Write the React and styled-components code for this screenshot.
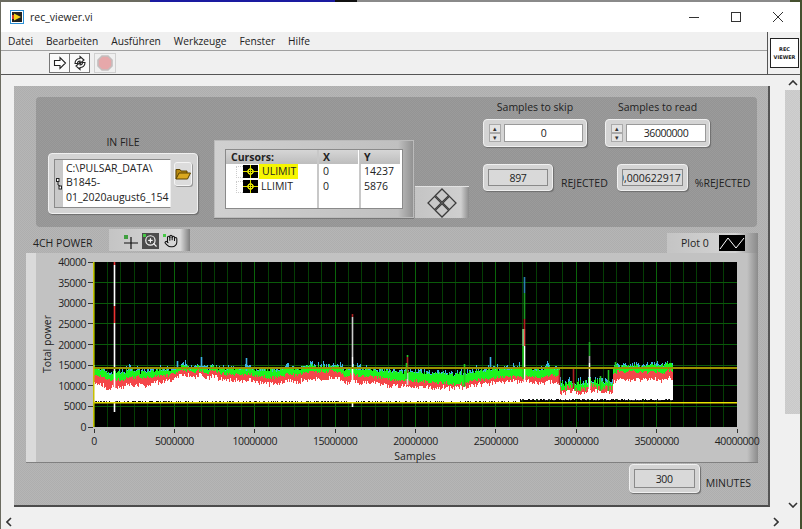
import { useMemo } from 'react'
import styled, { createGlobalStyle } from 'styled-components'
import { Hand, ZoomIn } from 'lucide-react'

const GlobalStyle = createGlobalStyle`
  html, body { margin: 0; padding: 0; }
  body {
    width: 802px;
    height: 529px;
    overflow: hidden;
    background: linear-gradient(90deg, #6b6b60 0 150px, #1a1aa0 150px 335px, #111 335px 357px, #8a8a8a 357px 790px, #45502f 790px);
    font-family: "Open Sans", "Liberation Sans", sans-serif;
    color: #222;
  }
`

const dither = (a, b) => `repeating-conic-gradient(${a} 0 25%, ${b} 0 50%) 0 0 / 2px 2px`

const X_TICKS = [0, 5, 10, 15, 20, 25, 30, 35, 40]
const Y_TICKS = [0, 5, 10, 15, 20, 25, 30, 35, 40]

const px = m => 94 + m * 16.075
const py = k => 426 - k * 4.125

// x, white top, red top, green top
const PROFILE = [
  [94, 383, 374, 367], [110, 386, 378, 371], [140, 384, 376, 370], [165, 381, 375, 369],
  [180, 374, 370, 366], [230, 378, 372, 367], [270, 383, 376, 369], [310, 378, 371, 365],
  [320, 377, 370, 365], [350, 381, 374, 368], [400, 384, 378, 370], [430, 386, 381, 372],
  [460, 387, 383, 373], [490, 382, 377, 369], [520, 381, 376, 368], [559, 383, 376, 368],
  [560, 391, 387, 381], [612, 390, 386, 380], [613, 379, 371, 365], [673, 379, 371, 364],
]

const SPIKES = [
  { x: 114, parts: [[261, 264, '#e33'], [264, 305, '#fff'], [305, 322, '#e33'], [322, 411, '#fff']] },
  { x: 352, parts: [[313, 316, '#a22'], [316, 356, '#ccc'], [356, 406, '#fff']] },
  { x: 407, parts: [[354, 356, '#2c2'], [356, 372, '#a22'], [372, 384, '#ddd']] },
  { x: 406, parts: [[362, 378, '#2c2']] },
  { x: 524, parts: [[276, 292, '#2a7fb0'], [292, 318, '#1a9a20'], [318, 328, '#b02020'], [328, 345, '#e44'], [345, 384, '#fff']] },
  { x: 522.6, parts: [[328, 345, '#8c8'], [345, 378, '#2c2']] },
  { x: 589, parts: [[341, 355, '#1a9a20'], [355, 362, '#aaa'], [362, 388, '#fff']] },
  { x: 177, parts: [[360, 368, '#3cb4e6']] },
  { x: 201, parts: [[356, 368, '#3cb4e6']] },
  { x: 246, parts: [[357, 370, '#3cb4e6']] },
  { x: 490, parts: [[356, 368, '#3cb4e6']] },
  { x: 464, parts: [[363, 386, '#2c2']] },
  { x: 573, parts: [[368, 388, '#a22']] },
  { x: 600, parts: [[375, 390, '#2c2']] },
  { x: 608, parts: [[369, 390, '#2c2']] },
  { x: 559, parts: [[369, 384, '#a22']] },
  { x: 615, parts: [[361, 372, '#2c2']] },
]

function profileAt(x) {
  for (let i = 1; i < PROFILE.length; i++) {
    const a = PROFILE[i - 1]
    const b = PROFILE[i]
    if (x <= b[0]) {
      const t = (x - a[0]) / (b[0] - a[0])
      return [a[1] + (b[1] - a[1]) * t, a[2] + (b[2] - a[2]) * t, a[3] + (b[3] - a[3]) * t]
    }
  }
  return PROFILE[PROFILE.length - 1].slice(1)
}

function buildBands() {
  let seed = 1845
  const rnd = () => {
    seed = (seed * 16807) % 2147483647
    return seed / 2147483647
  }
  const d = { blue: '', green: '', red: '', white: '', dark: '' }
  let wander = 0
  for (let x = 94; x < 673; x++) {
    const [w, r, g] = profileAt(x)
    const low = x >= 560 && x < 613
    const amp = low ? 6 : 3.5
    if (x % 7 === 0) wander = rnd() * 3 - 1.5
    const gy = Math.round(g + wander + rnd() * amp - amp / 2)
    const ry = Math.round(r + wander + rnd() * amp - amp / 2)
    const wy = Math.round(w + wander + rnd() * 5 - 2.5)
    const by = gy - Math.round(rnd() * rnd() * 6)
    const bottom = (x < 520 ? 400 : 398) + Math.round(rnd() * 1.4)
    const col = x + 0.5
    if (by < gy) d.blue += `M${col} ${by}V${gy}`
    d.green += `M${col} ${gy}V${ry}`
    d.red += `M${col} ${ry}V${wy}`
    d.white += `M${col} ${wy}V${bottom}`
    if (rnd() > 0.55) d.dark += `M${col} ${bottom}v1.4`
  }
  return d
}

export default function App() {
  const bands = useMemo(buildBands, [])

  return (
    <Desktop>
      <GlobalStyle />
      <Window>
        <TitleBar>
          <TitleIcon viewBox="0 0 14 14">
            <rect x="0.5" y="0.5" width="13" height="13" fill="#fff" stroke="#2b8fd6" />
            <rect x="2" y="2" width="10" height="10" fill="#222" />
            <path d="M4 3.5 L11 7 L4 10.5 Z" fill="#f2d21a" />
            <rect x="2" y="5" width="2" height="4" fill="#d23a2a" />
          </TitleIcon>
          <TitleText>rec_viewer.vi</TitleText>
          <WindowButton>
            <svg width="10" height="10" viewBox="0 0 10 10"><path d="M0 5.5H10" stroke="#333" /></svg>
          </WindowButton>
          <WindowButton>
            <svg width="10" height="10" viewBox="0 0 10 10"><rect x="0.5" y="0.5" width="9" height="9" fill="none" stroke="#333" /></svg>
          </WindowButton>
          <WindowButton>
            <svg width="10" height="10" viewBox="0 0 10 10"><path d="M0 0L10 10M10 0L0 10" stroke="#333" /></svg>
          </WindowButton>
        </TitleBar>

        <Head>
          <HeadBars>
            <MenuBar>
              <span>Datei</span>
              <span>Bearbeiten</span>
              <span>Ausführen</span>
              <span>Werkzeuge</span>
              <span>Fenster</span>
              <span>Hilfe</span>
            </MenuBar>
            <ToolBar>
              <ToolGroup>
                <ToolButton>
                  <svg width="14" height="14" viewBox="0 0 14 14">
                    <path d="M1.5 4.5H7V1.5L12.5 7L7 12.5V9.5H1.5Z" fill="#fff" stroke="#222" strokeWidth="1.1" />
                  </svg>
                </ToolButton>
                <ToolButton>
                  <svg width="16" height="16" viewBox="0 0 16 16" fill="none" stroke="#222" strokeWidth="1.1">
                    <path d="M3 8.5C3 5 5.5 3.5 8 3.5V1.5L12 5L8 8.5V6C6.5 6 5.5 7 5.5 8.5Z" fill="#fff" />
                    <path d="M13 7.5C13 11 10.5 12.5 8 12.5V14.5L4 11L8 7.5V10C9.5 10 10.5 9 10.5 7.5Z" fill="#fff" />
                  </svg>
                </ToolButton>
              </ToolGroup>
              <AbortButton>
                <svg width="16" height="16" viewBox="0 0 16 16">
                  <path d="M5 1H11L15 5V11L11 15H5L1 11V5Z" fill="#e6a8aa" stroke="#c4bebe" strokeWidth="1.6" />
                </svg>
              </AbortButton>
            </ToolBar>
          </HeadBars>
          <HeadIconCell>
            <ViIcon>REC<br />VIEWER</ViIcon>
          </HeadIconCell>
        </Head>

        <Body>
          <Main>
            <Pane>
              <TopPanel>
                <FileColumn>
                  <CenterLabel>IN FILE</CenterLabel>
                  <FileControl>
                    <PathField>
                      <PathGrip>
                        <svg width="6" height="12" viewBox="0 0 6 12" fill="#fff" stroke="#222">
                          <rect x="0.5" y="0.5" width="2.5" height="3" />
                          <rect x="3" y="8" width="2.5" height="3" />
                          <path d="M2 3.5V7L4 8" fill="none" />
                        </svg>
                      </PathGrip>
                      <PathText>
                        C:\PULSAR_DATA\<br />B1845-<br />01_2020august6_154<br />9_tmrf1.bin
                      </PathText>
                    </PathField>
                    <BrowseButton>
                      <svg width="16" height="12" viewBox="0 0 16 12">
                        <path d="M1 11V1.5H5L6 3H12V5" fill="#b98a10" stroke="#5a4300" />
                        <path d="M1 11L4 5H15.5L12.5 11Z" fill="#d9a820" stroke="#5a4300" />
                      </svg>
                    </BrowseButton>
                  </FileControl>
                </FileColumn>

                <CursorFrame>
                  <CursorTable>
                    <CursorHead $wide>Cursors:</CursorHead>
                    <CursorHead>X</CursorHead>
                    <CursorHead>Y</CursorHead>
                    <CursorName>
                      <TreeStub />
                      <CursorGlyph />
                      <Highlight>ULIMIT</Highlight>
                    </CursorName>
                    <CursorCell>0</CursorCell>
                    <CursorCell>14237</CursorCell>
                    <CursorName>
                      <TreeStub />
                      <CursorGlyph />
                      <PlainName>LLIMIT</PlainName>
                    </CursorName>
                    <CursorCell>0</CursorCell>
                    <CursorCell>5876</CursorCell>
                  </CursorTable>
                </CursorFrame>

                <DiamondButton>
                  <svg width="30" height="30" viewBox="0 0 30 30" fill="#c8c8c8" stroke="#3c3c3c" strokeWidth="1.3">
                    <path d="M15 1L21.6 7.6L15 14.2L8.4 7.6Z" />
                    <path d="M15 15.8L21.6 22.4L15 29L8.4 22.4Z" />
                    <path d="M7.6 8.4L14.2 15L7.6 21.6L1 15Z" />
                    <path d="M22.4 8.4L29 15L22.4 21.6L15.8 15Z" />
                  </svg>
                </DiamondButton>

                <NumericArea>
                  <NumericRow>
                    <NumericColumn>
                      <NumericLabel>Samples to skip</NumericLabel>
                      <SpinControl $width={104}>
                        <Spinner>
                          <SpinArrow>▴</SpinArrow>
                          <SpinArrow>▾</SpinArrow>
                        </Spinner>
                        <InputField>0</InputField>
                      </SpinControl>
                    </NumericColumn>
                    <NumericColumn>
                      <NumericLabel>Samples to read</NumericLabel>
                      <SpinControl $width={105}>
                        <Spinner>
                          <SpinArrow>▴</SpinArrow>
                          <SpinArrow>▾</SpinArrow>
                        </Spinner>
                        <InputField>36000000</InputField>
                      </SpinControl>
                    </NumericColumn>
                  </NumericRow>
                  <IndicatorRow>
                    <Indicator $width={70}><IndicatorValue>897</IndicatorValue></Indicator>
                    <SideLabel $gap={8}>REJECTED</SideLabel>
                    <Indicator $width={71} $gap={9}>
                      <IndicatorValue $clip>0,000622917</IndicatorValue>
                    </Indicator>
                    <SideLabel $gap={7}>%REJECTED</SideLabel>
                  </IndicatorRow>
                </NumericArea>
              </TopPanel>

              <ChartHead>
                <ChartTitle>4CH POWER</ChartTitle>
                <Palette>
                  <PaletteTool>
                    <svg width="15" height="15" viewBox="0 0 15 15">
                      <path d="M1 9H15M8 3V15" stroke="#111" strokeWidth="1.2" />
                      <rect x="1" y="1" width="4" height="4" fill="#3f9f3f" />
                    </svg>
                  </PaletteTool>
                  <PaletteTool $active>
                    <ZoomIn size={14} color="#f4f4f4" strokeWidth={2} />
                    <ToolDot />
                  </PaletteTool>
                  <PaletteTool>
                    <Hand size={14} color="#111" strokeWidth={1.8} />
                    <ToolDot />
                  </PaletteTool>
                </Palette>
                <PlotLegend>
                  <span>Plot 0</span>
                  <svg width="26" height="16" viewBox="0 0 26 16">
                    <rect width="26" height="16" fill="#000" />
                    <path d="M1 14L9 3L17 13L25 3" fill="none" stroke="#fff" />
                  </svg>
                </PlotLegend>
              </ChartHead>

              <ChartFrame>
                <ChartSvg width="732" height="209" viewBox="26 252 732 209">
                  <rect x="94" y="261" width="643" height="165" fill="#000" />
                  <g shapeRendering="crispEdges" strokeWidth="1">
                    {Array.from({ length: 48 }, (_, i) => (
                      <line key={i} x1={px(i * 5 / 6)} x2={px(i * 5 / 6)} y1="261" y2="426" stroke="#053d05" />
                    ))}
                    {X_TICKS.slice(1, -1).map(t => (
                      <line key={t} x1={px(t)} x2={px(t)} y1="261" y2="426" stroke="#0a640a" />
                    ))}
                    {Y_TICKS.slice(1, -1).map(t => (
                      <line key={t} x1="94" x2="737" y1={py(t)} y2={py(t)} stroke="#0a5a0a" />
                    ))}
                  </g>
                  <g shapeRendering="crispEdges" fill="none" strokeWidth="1">
                    <path d={bands.blue} stroke="#3cb4e6" />
                    <path d={bands.green} stroke="#19f51e" />
                    <path d={bands.red} stroke="#f4474a" />
                    <path d={bands.white} stroke="#fff" />
                    <path d={bands.dark} stroke="#333" />
                  </g>
                  <g fill="none" strokeWidth="1.6">
                    {SPIKES.map(s => s.parts.map(([a, b, c]) => (
                      <line key={`${s.x}-${a}`} x1={s.x + 0.5} x2={s.x + 0.5} y1={a} y2={b} stroke={c} />
                    )))}
                  </g>
                  <rect x="94" y="366" width="643" height="2" fill="#9a9200" />
                  <rect x="94" y="401" width="643" height="1.5" fill="#e8e200" />
                  <rect x="93" y="261" width="1.5" height="165" fill="#c8c000" />

                  <g stroke="#333" strokeWidth="1" shapeRendering="crispEdges">
                    {Y_TICKS.map(t => <line key={t} x1="88" x2="93" y1={py(t)} y2={py(t)} />)}
                    {X_TICKS.map(t => <line key={t} x1={px(t)} x2={px(t)} y1="428" y2="432" />)}
                  </g>
                  <AxisText>
                    {Y_TICKS.map(t => (
                      <text key={t} x="86" y={py(t) + 4} textAnchor="end">{t === 0 ? '0' : `${t}000`}</text>
                    ))}
                    {X_TICKS.map(t => (
                      <text key={t} x={px(t)} y="444" textAnchor="middle">{t === 0 ? '0' : `${t}000000`}</text>
                    ))}
                  </AxisText>
                  <AxisTitle>
                    <text x="415" y="459" textAnchor="middle">Samples</text>
                    <text transform="translate(51 343) rotate(-90)" textAnchor="middle">Total power</text>
                  </AxisTitle>
                </ChartSvg>
              </ChartFrame>

              <Footer>
                <Indicator $width={71} $height={29}><IndicatorValue>300</IndicatorValue></Indicator>
                <SideLabel $gap={6}>MINUTES</SideLabel>
              </Footer>
            </Pane>
          </Main>
          <VScroll>
            <ScrollChevron>
              <svg width="10" height="6" viewBox="0 0 10 6"><path d="M1 5L5 1L9 5" fill="none" stroke="#333" strokeWidth="1.6" /></svg>
            </ScrollChevron>
            <VThumb />
            <ScrollChevron>
              <svg width="10" height="6" viewBox="0 0 10 6"><path d="M1 1L5 5L9 1" fill="none" stroke="#333" strokeWidth="1.6" /></svg>
            </ScrollChevron>
          </VScroll>
        </Body>

        <HScroll>
          <svg width="6" height="10" viewBox="0 0 6 10"><path d="M5 1L1 5L5 9" fill="none" stroke="#333" strokeWidth="1.6" /></svg>
          <svg width="6" height="10" viewBox="0 0 6 10"><path d="M1 1L5 5L1 9" fill="none" stroke="#333" strokeWidth="1.6" /></svg>
        </HScroll>
      </Window>
    </Desktop>
  )
}

const Desktop = styled.div`
  width: 802px;
  height: 529px;
  padding: 2px 2px 0 1px;
  box-sizing: border-box;
`

const Window = styled.div`
  width: 799px;
  height: 527px;
  display: flex;
  flex-direction: column;
  background: #f0f0f0;
`

const TitleBar = styled.div`
  height: 30px;
  flex: none;
  display: flex;
  align-items: center;
  padding: 0 1px 0 9px;
  background: #fff;
`

const TitleIcon = styled.svg`
  width: 14px;
  height: 14px;
  margin-right: 6px;
`

const TitleText = styled.div`
  flex: 1;
  font-size: 10.5px;
`

const WindowButton = styled.div`
  width: 42px;
  height: 30px;
  display: flex;
  align-items: center;
  justify-content: center;
`

const Head = styled.div`
  flex: none;
  display: flex;
  height: 42px;
  border-bottom: 1px solid #555;
  box-sizing: content-box;
`

const HeadBars = styled.div`
  flex: 1;
  display: flex;
  flex-direction: column;
`

const MenuBar = styled.div`
  height: 18px;
  flex: none;
  display: flex;
  align-items: center;
  gap: 13px;
  padding-left: 7px;
  font-size: 10.2px;
  border-bottom: 1px solid #a0a0a0;
`

const ToolBar = styled.div`
  flex: 1;
  display: flex;
  align-items: center;
  padding-left: 48px;
`

const ToolGroup = styled.div`
  display: flex;
  border: 1px solid #777;
  background: #fafafa;
`

const ToolButton = styled.div`
  width: 19px;
  height: 18px;
  display: flex;
  align-items: center;
  justify-content: center;
  & + & { border-left: 1px solid #777; }
`

const AbortButton = styled.div`
  width: 20px;
  height: 18px;
  margin-left: 4px;
  display: flex;
  align-items: center;
  justify-content: center;
  border: 1px solid #d0d0d0;
`

const HeadIconCell = styled.div`
  width: 31px;
  flex: none;
  border-left: 1px solid #555;
  display: flex;
  align-items: center;
  justify-content: flex-end;
  padding-right: 1px;
`

const ViIcon = styled.div`
  width: 29px;
  height: 30px;
  box-sizing: border-box;
  border: 1px solid #222;
  background: #fff;
  font-family: "DejaVu Sans", sans-serif;
  font-weight: 700;
  font-size: 5px;
  line-height: 8px;
  text-align: center;
  padding-top: 6px;
`

const Body = styled.div`
  flex: 1;
  min-height: 0;
  display: flex;
`

const Main = styled.div`
  flex: 1;
  padding: 11px 15px 10px 13px;
`

const Pane = styled.div`
  width: 756px;
  height: 421px;
  box-sizing: border-box;
  background: ${dither('#b6b6b6', '#aeaeae')};
  border-right: 2px solid #555;
  border-bottom: 2px solid #4c4c4c;
  padding: 11px 10px 0 12px;
  display: flex;
  flex-direction: column;
`

const TopPanel = styled.div`
  width: 721px;
  height: 130px;
  margin-left: 10px;
  flex: none;
  display: flex;
  align-items: flex-start;
  border-radius: 4px;
  background: ${dither('#9b9b9b', '#949494')};
`

const FileColumn = styled.div`
  width: 150px;
  margin: 38px 0 0 12px;
`

const CenterLabel = styled.div`
  height: 17px;
  font-size: 10.5px;
  line-height: 14px;
  text-align: center;
`

const NumericLabel = styled(CenterLabel)`
  height: 19px;
`

const Raised = styled.div`
  box-sizing: border-box;
  background: #d4d4d4;
  border: 1px solid #f0f0f0;
  border-radius: 4px;
  box-shadow: 1px 1px 1px #6e6e6e;
`

const FileControl = styled(Raised)`
  margin-top: 1px;
  height: 61px;
  display: flex;
  align-items: flex-start;
  padding: 5px 5px;
`

const PathField = styled.div`
  width: 117px;
  height: 49px;
  flex: none;
  display: flex;
  box-sizing: border-box;
  border: 1px solid #8a8a8a;
  border-right: 1px solid #eee;
  background: #c9c9c9;
  overflow: hidden;
`

const PathGrip = styled.div`
  width: 8px;
  flex: none;
  display: flex;
  align-items: center;
  justify-content: center;
`

const PathText = styled.div`
  flex: 1;
  background: #fff;
  padding: 1px 0 0 3px;
  font-size: 10.5px;
  line-height: 14.3px;
  white-space: nowrap;
  overflow: hidden;
`

const BrowseButton = styled.div`
  width: 18px;
  height: 24px;
  margin: 3px 0 0 3px;
  box-sizing: border-box;
  border: 1px solid #f4f4f4;
  border-radius: 3px;
  background: #dcdcdc;
  box-shadow: 1px 1px 0 #999;
  display: flex;
  align-items: center;
  justify-content: center;
`

const CursorFrame = styled.div`
  width: 200px;
  height: 78px;
  flex: none;
  margin: 43px 0 0 16px;
  padding: 10px 12px;
  box-sizing: border-box;
  background: linear-gradient(90deg, #d0d0d0, #c0c0c0 92%, #8f8f8f);
  box-shadow: inset 0 0 0 1px #bbb, 0 1px 0 #777;
`

const CursorTable = styled.div`
  height: 58px;
  display: grid;
  grid-template-columns: 93px 41px 1fr;
  grid-template-rows: 14px 15px 15px 1fr;
  background:
    linear-gradient(#c8c8c8, #c8c8c8) 91px 0 / 2px 100% no-repeat,
    linear-gradient(#c8c8c8, #c8c8c8) 133px 0 / 2px 100% no-repeat,
    #fff;
  box-shadow: 0 0 0 1px #8a8a8a;
  font-size: 10.5px;
  line-height: 15px;
`

const CursorHead = styled.div`
  background: linear-gradient(#d6d6d6, #bdbdbd);
  font-weight: 700;
  line-height: 14px;
  padding-left: ${p => (p.$wide ? 5 : 4)}px;
  margin-right: 2px;
`

const CursorName = styled.div`
  display: flex;
  align-items: center;
`

const TreeStub = styled.div`
  width: 7px;
  height: 12px;
  margin: 0 0 0 10px;
  border: 1px dotted #ccc;
  border-right: 0;
  box-sizing: border-box;
`

const CursorGlyph = styled.div`
  width: 15px;
  height: 13px;
  margin-right: 1px;
  background:
    radial-gradient(circle at center, transparent 1.5px, #dfe000 2px, #dfe000 3px, transparent 3.5px),
    linear-gradient(#dfe000, #dfe000) center / 100% 1px no-repeat,
    linear-gradient(#dfe000, #dfe000) center / 1px 100% no-repeat,
    #000;
`

const Highlight = styled.span`
  background: #f6f600;
  padding: 0 2px 0 3px;
`

const PlainName = styled.span`
  padding-left: 2px;
`

const CursorCell = styled.div`
  padding-left: 4px;
`

const DiamondButton = styled.div`
  width: 54px;
  height: 32px;
  flex: none;
  margin: 89px 0 0 1px;
  display: flex;
  align-items: center;
  justify-content: center;
  background: linear-gradient(90deg, #c4c4c4, #cfcfcf 85%, #8c8c8c);
  border-top: 1px solid #e2e2e2;
  box-sizing: border-box;
`

const NumericArea = styled.div`
  margin: 3px 0 0 14px;
  width: 268px;
`

const NumericRow = styled.div`
  display: flex;
  gap: 18px;
`

const NumericColumn = styled.div`
  display: flex;
  flex-direction: column;
`

const SpinControl = styled(Raised)`
  width: ${p => p.$width}px;
  height: 28px;
  display: flex;
  align-items: center;
  padding: 0 3px 0 5px;
  gap: 3px;
`

const Spinner = styled.div`
  width: 12px;
  height: 18px;
  flex: none;
  display: flex;
  flex-direction: column;
`

const SpinArrow = styled.div`
  flex: 1;
  font-size: 7px;
  line-height: 9px;
  text-align: center;
  background: #e4e4e4;
  box-shadow: inset 0 0 0 1px #aaa;
  color: #333;
`

const InputField = styled.div`
  flex: 1;
  height: 18px;
  box-sizing: border-box;
  background: #fff;
  border: 1px solid #9a9a9a;
  font-size: 10.5px;
  letter-spacing: -0.45px;
  line-height: 16px;
  text-align: center;
`

const IndicatorRow = styled.div`
  margin-top: 17px;
  display: flex;
  align-items: flex-start;
`

const Indicator = styled(Raised)`
  width: ${p => p.$width}px;
  height: ${p => p.$height || 27}px;
  flex: none;
  margin-left: ${p => p.$gap || 0}px;
  padding: 4px 4px;
`

const IndicatorValue = styled.div`
  height: 100%;
  box-sizing: border-box;
  display: flex;
  align-items: center;
  justify-content: ${p => (p.$clip ? 'flex-end' : 'center')};
  overflow: hidden;
  white-space: nowrap;
  background: #d9d9d9;
  border: 1px solid #8a8a8a;
  font-size: 10.5px;
  letter-spacing: ${p => (p.$clip ? 0 : -0.3)}px;
  padding-right: ${p => (p.$clip ? 1 : 0)}px;
`

const SideLabel = styled.div`
  margin: 12px 0 0 ${p => p.$gap}px;
  font-size: 10.5px;
  line-height: 14px;
  white-space: nowrap;
`

const ChartHead = styled.div`
  height: 26px;
  flex: none;
  display: flex;
  align-items: flex-end;
  padding-left: 7px;
`

const ChartTitle = styled.div`
  width: 76px;
  font-size: 10.5px;
  line-height: 14px;
  padding-bottom: 3px;
`

const Palette = styled.div`
  width: 81px;
  height: 22px;
  margin-bottom: 2px;
  box-sizing: border-box;
  display: flex;
  gap: 3px;
  padding: 4px 0 0 13px;
  background: linear-gradient(90deg, #c4c4c4, #d8d8d8 88%, #7f7f7f);
`

const PaletteTool = styled.div`
  position: relative;
  width: 17px;
  height: 16px;
  display: flex;
  align-items: center;
  justify-content: center;
  background: ${p => (p.$active ? '#4c4c4c' : 'transparent')};
`

const ToolDot = styled.i`
  position: absolute;
  left: 1px;
  top: 1px;
  width: 3px;
  height: 3px;
  background: #46c846;
`

const PlotLegend = styled.div`
  width: 91px;
  height: 20px;
  margin-left: auto;
  box-sizing: border-box;
  display: flex;
  align-items: center;
  gap: 10px;
  padding-left: 14px;
  font-size: 10.5px;
  background: linear-gradient(90deg, #c4c4c4, #d4d4d4 75%, #8a8a8a);
`

const ChartFrame = styled.div`
  width: 732px;
  height: 209px;
  flex: none;
  background:
    linear-gradient(90deg, #dadada 0 10px, transparent 10px) no-repeat,
    linear-gradient(270deg, #8b8b8b, #c2c2c2 11px) no-repeat,
    #c2c2c2;
  box-shadow: 0 1px 0 #808080;
`

const ChartSvg = styled.svg`
  display: block;
  overflow: visible;
`

const AxisText = styled.g`
  font-size: 10.5px;
  letter-spacing: -0.45px;
  fill: #222;
`

const AxisTitle = styled.g`
  font-size: 10.5px;
  fill: #222;
`

const Footer = styled.div`
  flex: 1;
  display: flex;
  align-items: flex-start;
  justify-content: flex-end;
  padding: 2px 7px 0 0;
`

const VScroll = styled.div`
  width: 15px;
  flex: none;
  display: flex;
  flex-direction: column;
  background: #f0f0f0;
`

const ScrollChevron = styled.div`
  height: 15px;
  flex: none;
  display: flex;
  align-items: center;
  justify-content: center;
  &:last-child { margin-top: auto; padding-bottom: 3px; }
`

const VThumb = styled.div`
  height: 324px;
  flex: none;
  background: ${dither('#cfcfcf', '#c9c9c9')};
`

const HScroll = styled.div`
  height: 14px;
  flex: none;
  display: flex;
  align-items: center;
  justify-content: space-between;
  padding: 0 21px 0 5px;
`
